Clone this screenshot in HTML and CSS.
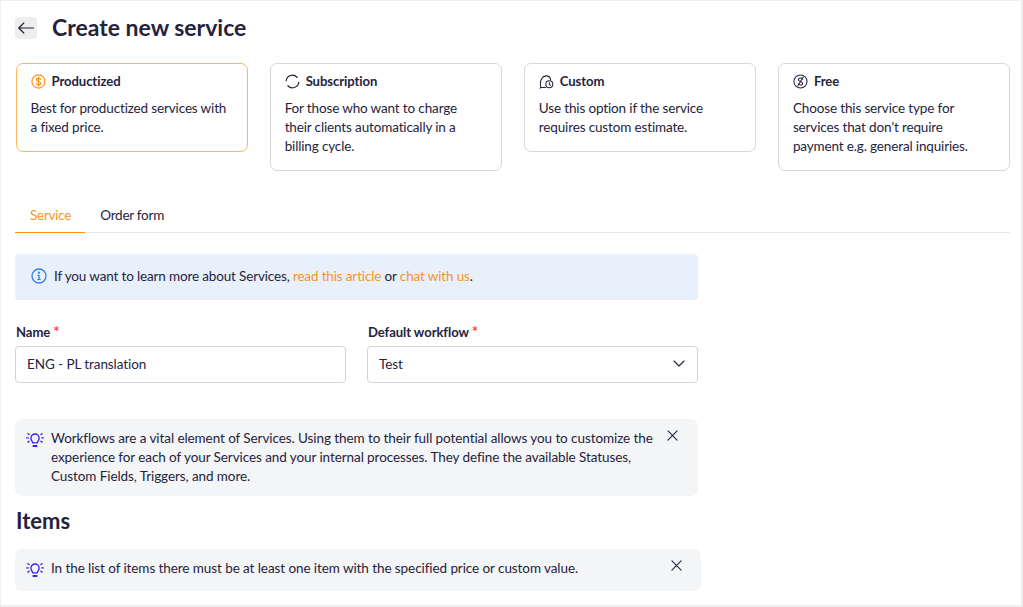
FILE: index.html
```html
<!DOCTYPE html>
<html lang="en">
<head>
    <meta charset="UTF-8">
    <meta name="viewport" content="width=device-width, initial-scale=1.0">
    <title>Create new service</title>
    <link rel="stylesheet" href="styles.css">
</head>
<body>
    <div class="page">
        <div class="page-header">
            <button class="back-button" aria-label="Back">
                <svg width="16" height="12" viewBox="0 0 16 12" fill="none" stroke="currentColor" stroke-width="1.2" stroke-linecap="round" stroke-linejoin="round">
                    <path d="M15.5 6H.8M5.8 1 .8 6l5 5"></path>
                </svg>
            </button>
            <h1>Create new service</h1>
        </div>

        <div class="type-cards">
            <div class="type-card selected">
                <div class="type-title">
                    <svg class="type-icon" viewBox="0 0 16 16" fill="none" stroke="#fb9319" stroke-width="1.3" stroke-linecap="round">
                        <circle cx="8" cy="8" r="7"></circle>
                        <path d="M10.2 5.800C9.900 4.900 9 4.500 8 4.500c-1.200 0-2.200.6-2.200 1.700S6.800 7.700 8 8s2.300.8 2.300 1.900-1 1.700-2.300 1.700c-1 0-1.900-.4-2.300-1.300M8 3.300v9.400"></path>
                    </svg>
                    <span>Productized</span>
                </div>
                <p>Best for productized services with a fixed price.</p>
            </div>
            <div class="type-card">
                <div class="type-title">
                    <svg class="type-icon" viewBox="0 0 16 16" fill="none" stroke="#25233c" stroke-width="1.300" stroke-linecap="round">
                        <path d="M1.300 7.200A6.700 6.700 0 0 1 12.900 3.500"></path>
                        <path d="M14.700 8.800A6.700 6.700 0 0 1 3.100 12.500"></path>
                    </svg>
                    <span>Subscription</span>
                </div>
                <p>For those who want to charge their clients automatically in a billing cycle.</p>
            </div>
            <div class="type-card">
                <div class="type-title">
                    <svg class="type-icon" viewBox="0 0 16 16" fill="none" stroke="#25233c" stroke-width="1.100" stroke-linecap="round">
                        <path d="M7 14.300H2.200L1.600 14.800C2 13.500 1.800 12.200 1.600 11 1 7 3.500 2 7.500 2c2.600 0 4.600 1.700 5 4.300"></path>
                        <circle cx="11" cy="11" r="3.700"></circle>
                        <path d="M11 9v2.200l1.300.8"></path>
                    </svg>
                    <span>Custom</span>
                </div>
                <p>Use this option if the service requires custom estimate.</p>
            </div>
            <div class="type-card">
                <div class="type-title">
                    <svg class="type-icon" viewBox="0 0 16 16" fill="none" stroke="#25233c" stroke-width="1.100" stroke-linecap="round">
                        <circle cx="8" cy="8" r="7"></circle>
                        <path d="M10.500 5.600C10 4.800 9.200 4.300 8.200 4.300c-1.300 0-2.400.7-2.400 1.800S6.900 7.600 8 8s2.300.9 2.300 2-1 1.800-2.300 1.800c-1 0-1.900-.5-2.400-1.300M5.200 12.500l5.600-9"></path>
                    </svg>
                    <span>Free</span>
                </div>
                <p>Choose this service type for services that don’t require payment e.g. general inquiries.</p>
            </div>
        </div>

        <div class="tabs">
            <a class="tab active">Service</a>
            <a class="tab">Order form</a>
        </div>

        <div class="form-column">
            <div class="info-banner">
                <svg class="info-icon" viewBox="0 0 16 16" fill="none" stroke="#2f80ed" stroke-width="1.300" stroke-linecap="round">
                    <circle cx="8" cy="8" r="7"></circle>
                    <path d="M8 7.300v4M6.800 7.300H8M6.800 11.300h2.400"></path>
                    <circle cx="8" cy="4.700" r=".5" fill="#2f80ed"></circle>
                </svg>
                <span>If you want to learn more about Services, <a>read this article</a> or <a>chat with us</a>.</span>
            </div>

            <div class="form-row">
                <div class="form-group">
                    <label>Name <span class="required">*</span></label>
                    <div class="field">ENG - PL translation</div>
                </div>
                <div class="form-group">
                    <label>Default workflow <span class="required">*</span></label>
                    <div class="field select">
                        <span>Test</span>
                        <svg width="12" height="7" viewBox="0 0 12 7" fill="none" stroke="#25233c" stroke-width="1.100" stroke-linecap="round" stroke-linejoin="round">
                            <polyline points="1 1 6 6 11 1"></polyline>
                        </svg>
                    </div>
                </div>
            </div>

            <div class="tip">
                <svg class="tip-icon" viewBox="0 0 18 16" fill="none" stroke="#3d1fe6" stroke-width="1.200" stroke-linecap="round" stroke-linejoin="round">
                    <path d="M7 11.500C6.700 10 5.300 9.400 5.300 7.200a3.700 3.700 0 0 1 7.400 0c0 2.200-1.400 2.800-1.700 4.300z"></path>
                    <path d="M7.500 14.300h3" stroke-width="1.600"></path>
                    <path d="M1.500 7h1.400M15.100 7h1.400M2.600 3.200l1.100.8M15.400 3.200l-1.100.8M2.600 10.800l1.100-.8M15.400 10.800l-1.100-.8"></path>
                </svg>
                <p>Workflows are a vital element of Services. Using them to their full potential allows you to customize the experience for each of your Services and your internal processes. They define the available Statuses, Custom Fields, Triggers, and more.</p>
                <svg class="tip-close" viewBox="0 0 12 12" fill="none" stroke="#25233c" stroke-width="1.200" stroke-linecap="round">
                    <path d="M1 1l10 10M11 1 1 11"></path>
                </svg>
            </div>
        </div>

        <h2>Items</h2>

        <div class="tip tip-wide">
            <svg class="tip-icon" viewBox="0 0 18 16" fill="none" stroke="#3d1fe6" stroke-width="1.200" stroke-linecap="round" stroke-linejoin="round">
                <path d="M7 11.500C6.700 10 5.300 9.400 5.300 7.200a3.700 3.700 0 0 1 7.400 0c0 2.200-1.400 2.800-1.700 4.300z"></path>
                <path d="M7.500 14.300h3" stroke-width="1.600"></path>
                <path d="M1.500 7h1.400M15.100 7h1.400M2.600 3.200l1.100.8M15.400 3.200l-1.100.8M2.600 10.800l1.100-.8M15.400 10.800l-1.100-.8"></path>
            </svg>
            <p>In the list of items there must be at least one item with the specified price or custom value.</p>
            <svg class="tip-close" viewBox="0 0 12 12" fill="none" stroke="#25233c" stroke-width="1.200" stroke-linecap="round">
                <path d="M1 1l10 10M11 1 1 11"></path>
            </svg>
        </div>
    </div>
</body>
</html>
```

FILE: styles.css
```css
html, body {
    margin: 0;
    height: 100%;
}

body {
    font-family: "Lato", "Noto Sans", sans-serif;
    font-size: 13.5px;
    letter-spacing: -0.08px;
    color: #25233c;
    background-color: #fff;
}

.page {
    box-sizing: border-box;
    height: 607px;
    overflow: hidden;
    padding: 16px 11px 0 14px;
    border: 1px solid #efefef;
    border-width: 1px 2px 2px 1px;
}

.page-header {
    display: flex;
    align-items: center;
    gap: 15px;
    height: 22px;
    margin-bottom: 24px;
}

.back-button {
    display: flex;
    align-items: center;
    justify-content: center;
    width: 22px;
    height: 22px;
    padding: 0;
    border: none;
    border-radius: 3px;
    background-color: #eee;
    color: #25233c;
}

h1 {
    margin: 0 0 2px;
    font-size: 23px;
    font-weight: 700;
    letter-spacing: 0;
}

.type-cards {
    display: flex;
    align-items: flex-start;
    gap: 22px;
    margin: 0 0 29px .5px;
}

.type-card {
    box-sizing: border-box;
    flex: 1;
    padding: 8px 14px 14px;
    border: 1px solid #d8d8dc;
    border-radius: 7px;
}

.type-card.selected {
    border-color: #fbb565;
}

.type-title {
    display: flex;
    align-items: center;
    gap: 6px;
    font-weight: 700;
    font-size: 13.1px;
    line-height: 18px;
    margin-bottom: 9px;
}

.type-icon {
    flex: none;
    width: 15px;
    height: 15px;
}

.type-card p {
    margin: 0;
    line-height: 19px;
    letter-spacing: -0.14px;
}

.tabs {
    display: flex;
    height: 32px;
    border-bottom: 1px solid #e6e6e6;
    margin-bottom: 21px;
    letter-spacing: -0.25px;
}

.tab {
    box-sizing: border-box;
    height: 33px;
    padding: 6px 14px 0 15px;
    line-height: 18px;
}

.tab.active {
    color: #fb9319;
    border-bottom: 1px solid #fb9319;
}

.form-column {
    width: 683px;
}

.info-banner {
    box-sizing: border-box;
    display: flex;
    align-items: center;
    gap: 7px;
    height: 46px;
    padding: 0 16px 2px;
    border-radius: 4px;
    background-color: #e8f0fc;
    letter-spacing: -0.15px;
}

.info-icon {
    flex: none;
    width: 16px;
    height: 16px;
}

.info-banner a {
    color: #fb9319;
}

.form-row {
    display: flex;
    gap: 21px;
    margin-top: 22px;
    margin-bottom: 36px;
}

.form-group {
    flex: 1;
}

.form-group label {
    display: block;
    padding-left: 1px;
    font-weight: 700;
    font-size: 13.1px;
    line-height: 18px;
    margin-bottom: 5px;
}

.required {
    color: #f2494b;
    font-size: 15px;
}

.field {
    box-sizing: border-box;
    display: flex;
    align-items: center;
    height: 37px;
    padding: 0 12px 2px 11px;
    border: 1px solid #d4d4d8;
    border-radius: 4px;
}

.field.select {
    justify-content: space-between;
}

.tip {
    box-sizing: border-box;
    display: flex;
    align-items: flex-start;
    padding: 10px 20px 10px 10px;
    border-radius: 7px;
    background-color: #f4f5f7;
}

.tip p {
    flex: 1;
    margin: 0;
    line-height: 19px;
}

.tip-icon {
    flex: none;
    width: 20px;
    height: 18px;
    margin: 1px 6px 0 0;
}

.tip-close {
    flex: none;
    width: 11px;
    height: 11px;
    margin-left: 6px;
    margin-top: 1px;
}

.tip-wide {
    width: 686px;
    height: 42px;
    padding-right: 19px;
}

h2 {
    margin: 13px 0 16px 1px;
    font-size: 22px;
    line-height: 24px;
    font-weight: 700;
    letter-spacing: 0;
}
```
